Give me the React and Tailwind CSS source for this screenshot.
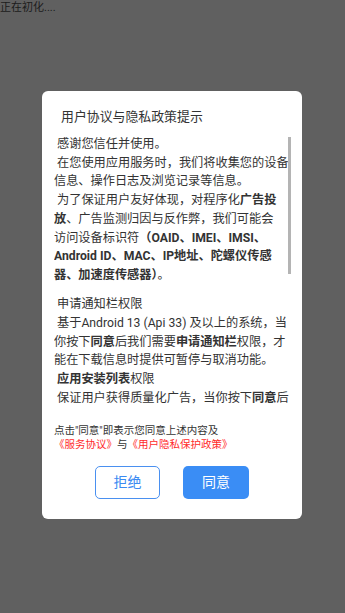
import React from 'react';

const FONT = { fontFamily: 'Roboto, "Noto Sans CJK SC", sans-serif' };

const B = ({ children }) => <span className="font-bold">{children}</span>;

// lines are broken where the dialog breaks them
const lines = [
  <>&nbsp;感谢您信任并使用。</>,
  <>&nbsp;在您使用应用服务时，我们将收集您的设备</>,
  <>信息、操作日志及浏览记录等信息。</>,
  <>&nbsp;为了保证用户友好体现，对程序化<B>广告投</B></>,
  <><B>放</B>、广告监测归因与反作弊，我们可能会</>,
  <>访问设备标识符<B>（OAID、IMEI、IMSI、</B></>,
  <><B>Android ID、MAC、IP地址、陀螺仪传感</B></>,
  <><B>器、加速度传感器）</B>。</>,
];

const lines2 = [
  <>&nbsp;申请通知栏权限</>,
  <>&nbsp;基于Android 13 (Api 33) 及以上的系统，当</>,
  <>你按下<B>同意</B>后我们需要<B>申请通知栏</B>权限，才</>,
  <>能在下载信息时提供可暂停与取消功能。</>,
  <>&nbsp;<B>应用安装列表</B>权限</>,
  <>&nbsp;保证用户获得质量化广告，当你按下<B>同意</B>后</>,
];

export default function App() {
  return (
    <div className="w-[345px] h-[613px] bg-[#606060] relative overflow-hidden" style={FONT}>
      <div className="text-[11px] leading-[14px] text-[#1c1c1c] pt-[1px]">正在初化....</div>

      {/* privacy dialog */}
      <div className="absolute left-[42px] top-[91px] w-[260px] h-[428px] bg-white rounded-[6px] flex flex-col">
        <div className="pl-[19px] pt-[17px] h-[44px] text-[12.9px] leading-[18px] text-[#333]">
          用户协议与隐私政策提示
        </div>

        <div className="relative ml-[12px] w-[238px] h-[274px] overflow-hidden text-[12.2px] leading-[18.7px] text-[#333]">
          {lines.map((l, i) => (
            <div key={i} className="whitespace-nowrap">{l}</div>
          ))}
          <div className="h-[10.5px]" />
          {lines2.map((l, i) => (
            <div key={i} className="whitespace-nowrap">{l}</div>
          ))}
          <div className="absolute right-[1.5px] top-[2px] w-[3px] h-[137px] bg-[#b4b4b4]" />
        </div>

        <div className="mt-[15px] px-[12px] text-[10.5px] leading-[13.5px] text-[#333]">
          <div>点击"同意"即表示您同意上述内容及</div>
          <div>
            <span className="text-[#ff2b2b]">《服务协议》</span>与<span className="text-[#ff2b2b]">《用户隐私保护政策》</span>
          </div>
        </div>

        <div className="mt-[15px] flex justify-center gap-[23px]">
          <button className="w-[65px] h-[33px] rounded-[5px] border border-[#4a90f0] text-[#3a8af2] text-[14px] bg-white">
            拒绝
          </button>
          <button className="w-[66px] h-[33px] rounded-[5px] bg-[#3a8df5] text-white text-[14px]">
            同意
          </button>
        </div>
      </div>
    </div>
  );
}
